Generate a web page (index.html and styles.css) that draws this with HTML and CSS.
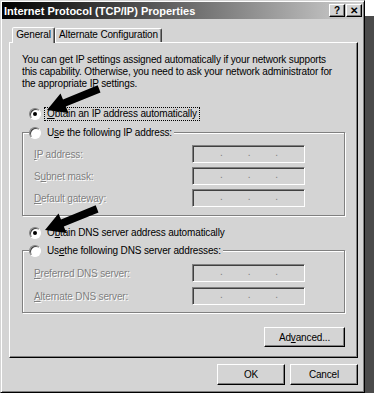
FILE: index.html
```html
<!DOCTYPE html>
<html lang="en">
<head>
    <meta charset="UTF-8">
    <title>Internet Protocol (TCP/IP) Properties</title>
    <link rel="stylesheet" href="styles.css">
</head>
<body>
    <div class="window">
        <div class="titlebar">
            <span class="title">Internet Protocol (TCP/IP) Properties</span>
            <div class="title-btns">
                <span class="tbtn">?</span>
                <span class="tbtn">&#x2715;</span>
            </div>
        </div>

        <div class="content">
            <div class="tabs">
                <div class="tab active">General</div>
                <div class="tab alt">Alternate Configuration</div>
            </div>

            <div class="panel">
                <p class="intro">You can get IP settings assigned automatically if your network supports<br>this capability. Otherwise, you need to ask your network administrator for<br>the appropriate IP settings.</p>

                <div class="option first">
                    <span class="radio checked"></span>
                    <span class="focus"><u>O</u>btain an IP address automatically</span>
                </div>

                <div class="group">
                    <div class="legend"><span class="radio"></span>U<u>s</u>e the following IP address:</div>
                    <div class="row">
                        <span class="label"><u>I</u>P address:</span>
                        <span class="ipbox"><i>.</i><i>.</i><i>.</i></span>
                    </div>
                    <div class="row">
                        <span class="label">S<u>u</u>bnet mask:</span>
                        <span class="ipbox"><i>.</i><i>.</i><i>.</i></span>
                    </div>
                    <div class="row">
                        <span class="label"><u>D</u>efault gateway:</span>
                        <span class="ipbox"><i>.</i><i>.</i><i>.</i></span>
                    </div>
                </div>

                <div class="option dns">
                    <span class="radio checked"></span>
                    <span class="text">O<u>b</u>tain DNS server address automatically</span>
                </div>

                <div class="group dns-group">
                    <div class="legend"><span class="radio"></span>Us<u>e</u> the following DNS server addresses:</div>
                    <div class="row">
                        <span class="label"><u>P</u>referred DNS server:</span>
                        <span class="ipbox"><i>.</i><i>.</i><i>.</i></span>
                    </div>
                    <div class="row">
                        <span class="label"><u>A</u>lternate DNS server:</span>
                        <span class="ipbox"><i>.</i><i>.</i><i>.</i></span>
                    </div>
                </div>

                <div class="adv-row">
                    <button class="btn adv">Ad<u>v</u>anced...</button>
                </div>
            </div>

            <div class="footer">
                <button class="btn">OK</button>
                <button class="btn">Cancel</button>
            </div>
        </div>

        <!-- the two black pointer arrows drawn over the dialog -->
        <svg class="arrows" width="365" height="393" viewBox="0 0 365 393">
            <polygon points="47,110 60.5,93.5 63,99.5 97.7,85.3 100.5,92.5 65.8,106.6 68.5,113" />
            <polygon transform="translate(-2,120)" points="47,110 60.5,93.5 63,99.5 97.7,85.3 100.5,92.5 65.8,106.6 68.5,113" />
        </svg>
    </div>
</body>
</html>
```

FILE: styles.css
```css
* {
    margin: 0;
    padding: 0;
    box-sizing: border-box;
}

body {
    background-color: #FFFFFF;
    font-family: "Liberation Sans", Arial, sans-serif;
    font-size: 10px;
    letter-spacing: -0.15px;
    color: #000000;
}

u {
    text-decoration: underline;
}

.window {
    position: relative;
    width: 365px;
    height: 393px;
    background-color: #D4D4D4;
    border: 1px solid;
    border-color: #D4D4D4 #000000 #000000 #D4D4D4;
    padding: 1px;
    box-shadow: inset 1px 1px 0 #FFFFFF, inset -1px -1px 0 #808080;
    display: flex;
    flex-direction: column;
}

/* drop shadow strips */
.window::before {
    content: "";
    position: absolute;
    right: -10px;
    top: 15px;
    bottom: -1px;
    width: 9px;
    background-color: #4B4B4B;
}

.window::after {
    content: "";
    position: absolute;
    left: 18px;
    right: -10px;
    bottom: -13px;
    height: 12px;
    background-color: #4B4B4B;
}

.titlebar {
    height: 17px;
    background: linear-gradient(to right, #000000, #D0D0D0);
    display: flex;
    align-items: center;
    justify-content: space-between;
    padding: 0 1px 0 2px;
}

.title {
    color: #FFFFFF;
    font-weight: bold;
    font-size: 11px;
    letter-spacing: 0;
}

.title-btns {
    display: flex;
    gap: 1px;
}

.tbtn {
    width: 16px;
    height: 13px;
    background-color: #D4D4D4;
    border: 1px solid;
    border-color: #FFFFFF #000000 #000000 #FFFFFF;
    box-shadow: inset -1px -1px 0 #808080;
    font-size: 10px;
    font-weight: bold;
    line-height: 11px;
    text-align: center;
    color: #000000;
}

.content {
    flex: 1;
    display: flex;
    flex-direction: column;
    padding: 7px 5px 0 7px;
}

.tabs {
    display: flex;
    align-items: flex-end;
    height: 16px;
    padding-left: 3px;
}

.tab {
    height: 14px;
    border: 1px solid;
    border-bottom: none;
    border-color: #FFFFFF #404040 transparent #FFFFFF;
    border-radius: 2px 2px 0 0;
    box-shadow: inset -1px 0 0 #808080;
    line-height: 12px;
    text-align: center;
    white-space: nowrap;
}

.tab.active {
    width: 43px;
    height: 16px;
    margin-bottom: -1px;
    position: relative;
    z-index: 1;
    background-color: #D4D4D4;
    line-height: 13px;
}

.tab.alt {
    width: 107px;
}

.panel {
    height: 316px;
    border: 1px solid;
    border-color: #FFFFFF #000000 #000000 #FFFFFF;
    box-shadow: inset -1px -1px 0 #808080;
    padding: 11px 12px 0 12px;
    display: flex;
    flex-direction: column;
}

.intro {
    line-height: 12px;
    white-space: nowrap;
}

.option {
    display: flex;
    align-items: center;
    height: 13px;
    padding-left: 7px;
}

.option.first {
    margin-top: 17px;
}

.option.dns {
    margin-top: 10px;
}

.radio {
    width: 12px;
    height: 12px;
    border-radius: 50%;
    background-color: #FFFFFF;
    border: 1px solid;
    border-color: #808080 #FFFFFF #FFFFFF #808080;
    box-shadow: inset 1px 1px 0 #404040;
    margin-right: 4px;
    display: flex;
    align-items: center;
    justify-content: center;
    flex-shrink: 0;
}

.radio.checked::after {
    content: "";
    width: 4px;
    height: 4px;
    border-radius: 50%;
    background-color: #000000;
}

.focus {
    padding: 0 2px;
    outline: 1px dotted #000000;
    line-height: 12px;
}

.option .text {
    padding-left: 2px;
}

.group {
    margin-top: 12px;
    border: 1px solid #808080;
    box-shadow: inset 1px 1px 0 #FFFFFF, 1px 1px 0 #FFFFFF;
    padding: 0 0 8px 11px;
    display: flex;
    flex-direction: column;
}

.dns-group {
    margin-top: 11px;
    padding-bottom: 7px;
}

.legend {
    align-self: flex-start;
    display: flex;
    align-items: center;
    height: 13px;
    margin: -7px 0 0 -5px;
    padding-right: 2px;
    background-color: #D4D4D4;
}

.legend .radio {
    margin-right: 6px;
}

.row {
    display: flex;
    align-items: center;
    height: 18px;
    margin-top: 4px;
}

.legend + .row {
    margin-top: 6px;
}

.dns-group .row {
    margin-top: 5px;
}

.dns-group .legend + .row {
    margin-top: 7px;
}

.label {
    width: 158px;
    color: #808080;
    text-shadow: 1px 1px 0 #FFFFFF;
}

.ipbox {
    width: 113px;
    height: 18px;
    border: 1px solid;
    border-color: #808080 #FFFFFF #FFFFFF #808080;
    box-shadow: inset 1px 1px 0 #404040;
    display: flex;
    gap: 25px;
    padding-left: 27px;
    line-height: 14px;
}

.ipbox i {
    font-style: normal;
    color: #808080;
}

.adv-row {
    display: flex;
    justify-content: flex-end;
    margin-top: 14px;
}

.btn {
    height: 20px;
    background-color: #D4D4D4;
    border: 1px solid;
    border-color: #FFFFFF #000000 #000000 #FFFFFF;
    box-shadow: inset -1px -1px 0 #808080;
    font-family: "Liberation Sans", Arial, sans-serif;
    font-size: 10px;
    letter-spacing: -0.15px;
    color: #000000;
}

.adv {
    width: 81px;
}

.footer {
    display: flex;
    justify-content: flex-end;
    gap: 5px;
    margin-top: 6px;
}

.footer .btn {
    width: 68px;
    height: 21px;
}

.arrows {
    position: absolute;
    left: -1px;
    top: -1px;
    fill: #000000;
}
```
